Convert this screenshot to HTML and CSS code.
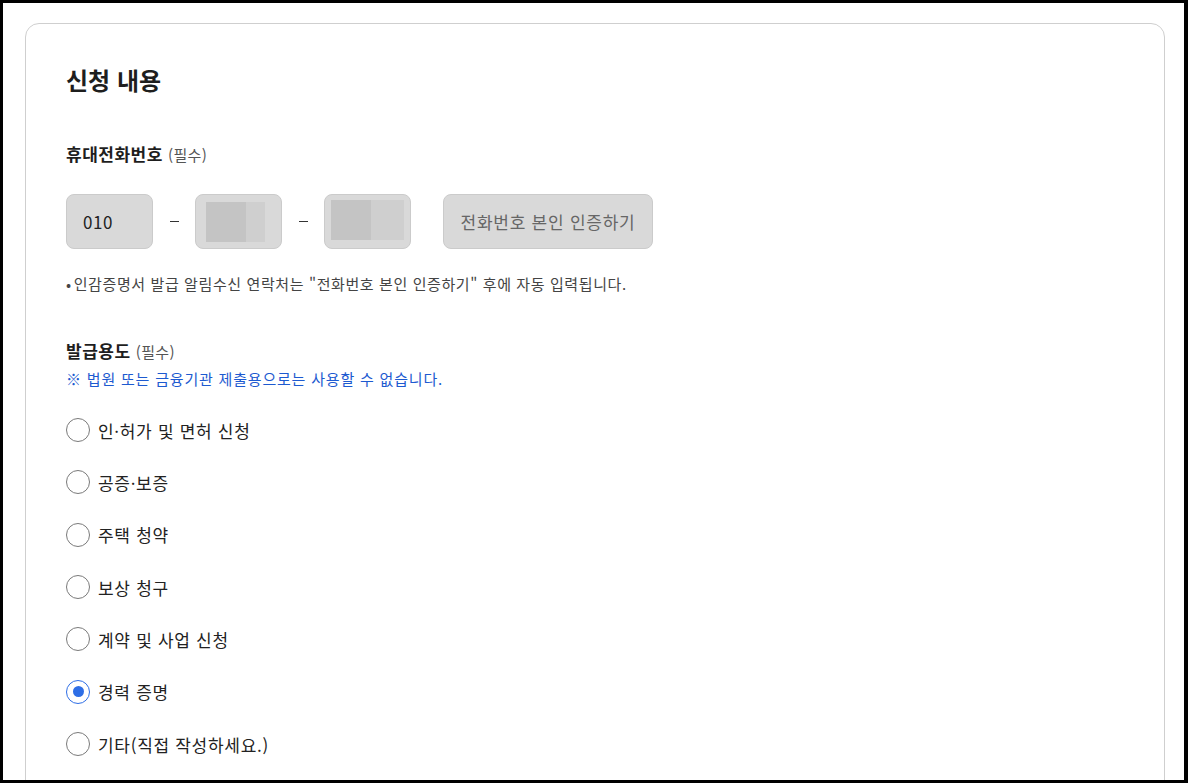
FILE: index.html
```html
<!DOCTYPE html>
<html lang="ko">
<head>
<meta charset="utf-8">
<title>신청 내용</title>
<link rel="stylesheet" href="styles.css">
</head>
<body>
<div class="page">
  <section class="card">
    <h2 class="title">신청 내용</h2>

    <div class="label">휴대전화번호 <span class="req">(필수)</span></div>
    <div class="phone-row">
      <div class="field"><span class="val">010</span></div>
      <span class="dash"></span>
      <div class="field masked"><span class="m1"></span><span class="m2"></span></div>
      <span class="dash"></span>
      <div class="field masked"><span class="m1"></span><span class="m2 m2b"></span></div>
      <button class="verify" type="button">전화번호 본인 인증하기</button>
    </div>
    <p class="note"><span class="bullet">•</span>인감증명서 발급 알림수신 연락처는 "전화번호 본인 인증하기" 후에 자동 입력됩니다.</p>

    <div class="label label2">발급용도 <span class="req">(필수)</span></div>
    <p class="warn">※ 법원 또는 금융기관 제출용으로는 사용할 수 없습니다.</p>

    <ul class="radios">
      <li class="radio"><span class="dot"></span>인·허가 및 면허 신청</li>
      <li class="radio"><span class="dot"></span>공증·보증</li>
      <li class="radio"><span class="dot"></span>주택 청약</li>
      <li class="radio"><span class="dot"></span>보상 청구</li>
      <li class="radio"><span class="dot"></span>계약 및 사업 신청</li>
      <li class="radio checked"><span class="dot"></span>경력 증명</li>
      <li class="radio"><span class="dot"></span>기타(직접 작성하세요.)</li>
    </ul>
  </section>
</div>
</body>
</html>
```

FILE: styles.css
```css
html, body {
  margin: 0;
  padding: 0;
  background: #000;
}
body {
  font-family: "Noto Sans CJK KR", "Noto Sans", sans-serif;
  color: #222;
}
.page {
  margin: 3px 4px 0 3px;
  height: 777px;
  background: #fff;
  overflow: hidden;
  padding-top: 20px;
  box-sizing: border-box;
}
.card {
  margin: 0 19px 0 22px;
  border: 1px solid #cfcfcf;
  border-radius: 14px;
  padding: 40px 40px 40px 40px;
  min-height: 900px;
  box-sizing: border-box;
}
.title {
  margin: 0;
  font-size: 24px;
  line-height: 32px;
  font-weight: 700;
  color: #1e1e1e;
}
.label {
  margin-top: 46px;
  font-size: 17px;
  line-height: 24px;
  font-weight: 700;
  letter-spacing: 0.5px;
  color: #1e1e1e;
}
.label2 {
  margin-top: 45px;
}
.req {
  font-size: 15px;
  font-weight: 400;
  letter-spacing: 0.3px;
  color: #555;
}
.phone-row {
  margin-top: 27px;
  display: flex;
  align-items: center;
  height: 55px;
}
.field {
  width: 87px;
  height: 55px;
  box-sizing: border-box;
  background: #d9d9d9;
  border: 1px solid #cbcbcb;
  border-radius: 8px;
  display: flex;
  align-items: center;
  padding-left: 16px;
}
.val {
  font-size: 17px;
  letter-spacing: 0.6px;
  color: #222;
}
.masked {
  padding-left: 10px;
  padding-top: 1px;
}
.m1 {
  display: block;
  width: 40px;
  height: 40px;
  background: #c4c4c4;
}
.m2 {
  display: block;
  width: 19px;
  height: 40px;
  background: #cfcfcf;
}
.m2b {
  width: 33px;
}
.masked + .dash + .masked {
  padding-left: 6px;
  align-items: flex-start;
  padding-top: 5px;
}
.dash {
  width: 42px;
  display: flex;
  justify-content: center;
}
.dash::before {
  content: "";
  width: 9px;
  height: 1px;
  margin-left: 1px;
  background: #333;
}
.verify {
  margin-left: 32px;
  width: 210px;
  height: 55px;
  background: #d9d9d9;
  border: 1px solid #cbcbcb;
  border-radius: 8px;
  font-family: inherit;
  font-size: 17px;
  letter-spacing: 0.75px;
  color: #666;
  padding: 0;
}
.note {
  margin: 25px 0 0;
  font-size: 15px;
  line-height: 20px;
  letter-spacing: 0.6px;
  color: #444;
}
.bullet {
  margin-right: 2px;
}
.warn {
  margin: 5px 0 0;
  font-size: 15px;
  line-height: 20px;
  letter-spacing: 0.8px;
  color: #1d5ad0;
}
.radios {
  list-style: none;
  margin: 15px 0 0;
  padding: 0;
}
.radio {
  height: 52.33px;
  display: flex;
  align-items: center;
  font-size: 17px;
  letter-spacing: 0.7px;
  color: #222;
}
.dot {
  width: 24px;
  height: 24px;
  box-sizing: border-box;
  border: 1.5px solid #7a7a7a;
  border-radius: 50%;
  margin-right: 8px;
  display: flex;
  align-items: center;
  justify-content: center;
}
.checked .dot {
  border-color: #2e6ee6;
}
.checked .dot::after {
  content: "";
  width: 11px;
  height: 11px;
  border-radius: 50%;
  background: #2e6ee6;
}
```
